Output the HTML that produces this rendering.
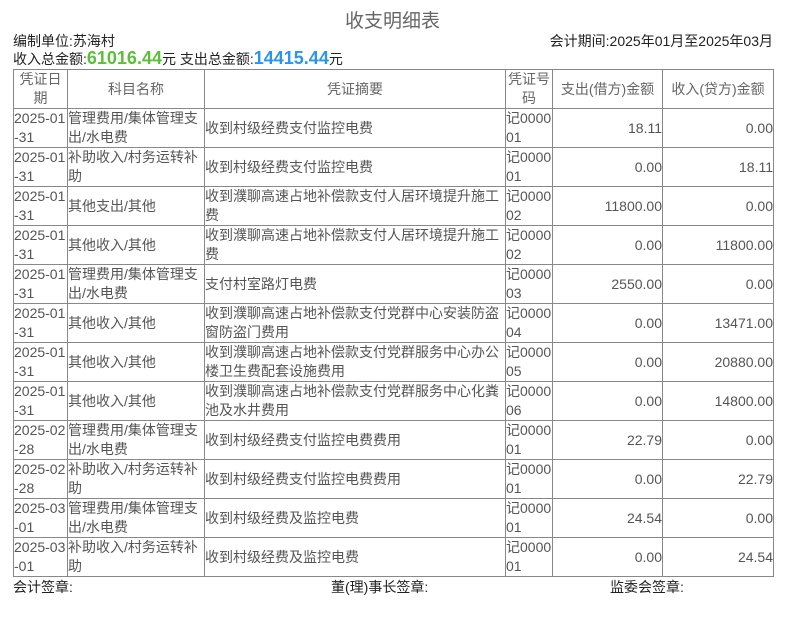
<!DOCTYPE html>
<html><head><meta charset="utf-8"><style>
*{margin:0;padding:0;box-sizing:border-box}
body{width:785px;height:618px;background:#fff;font-family:"Liberation Sans","Noto Sans CJK SC",sans-serif;font-size:14px;color:#222;position:relative;overflow:hidden}
.t{position:absolute;left:0;width:785px;top:6px;text-align:center;font-size:19px;color:#666}
.a{position:absolute;left:13px;top:31px}
.b{position:absolute;right:12px;top:31px}
.c{position:absolute;left:13px;top:48px}
.g{color:#5bbf3a;font-weight:bold;font-size:18px}
.bl{color:#2b95ee;font-weight:bold;font-size:18px}
table{position:absolute;left:13px;top:69px;border-collapse:collapse;table-layout:fixed;width:760px}
td,th{border:1px solid #888;line-height:19px;height:39px;color:#555;font-weight:normal;padding:0;overflow:hidden;word-break:break-all}
th{color:#666;text-align:center}
td.r{text-align:right;padding-right:0}
.f{position:absolute;top:577px}
</style></head><body>
<div class="t">收支明细表</div>
<div class="a">编制单位:苏海村</div>
<div class="b">会计期间:2025年01月至2025年03月</div>
<div class="c">收入总金额:<span class="g">61016.44</span>元 支出总金额:<span class="bl">14415.44</span>元</div>
<table>
<colgroup><col style="width:54px"><col style="width:137px"><col style="width:301px"><col style="width:47px"><col style="width:110px"><col style="width:111px"></colgroup>
<tr><th>凭证日期</th><th>科目名称</th><th>凭证摘要</th><th>凭证号码</th><th>支出(借方)金额</th><th>收入(贷方)金额</th></tr>
<tr><td>2025-01-31</td><td>管理费用/集体管理支出/水电费</td><td>收到村级经费支付监控电费</td><td>记000001</td><td class="r">18.11</td><td class="r">0.00</td></tr>
<tr><td>2025-01-31</td><td>补助收入/村务运转补助</td><td>收到村级经费支付监控电费</td><td>记000001</td><td class="r">0.00</td><td class="r">18.11</td></tr>
<tr><td>2025-01-31</td><td>其他支出/其他</td><td>收到濮聊高速占地补偿款支付人居环境提升施工费</td><td>记000002</td><td class="r">11800.00</td><td class="r">0.00</td></tr>
<tr><td>2025-01-31</td><td>其他收入/其他</td><td>收到濮聊高速占地补偿款支付人居环境提升施工费</td><td>记000002</td><td class="r">0.00</td><td class="r">11800.00</td></tr>
<tr><td>2025-01-31</td><td>管理费用/集体管理支出/水电费</td><td>支付村室路灯电费</td><td>记000003</td><td class="r">2550.00</td><td class="r">0.00</td></tr>
<tr><td>2025-01-31</td><td>其他收入/其他</td><td>收到濮聊高速占地补偿款支付党群中心安装防盗窗防盗门费用</td><td>记000004</td><td class="r">0.00</td><td class="r">13471.00</td></tr>
<tr><td>2025-01-31</td><td>其他收入/其他</td><td>收到濮聊高速占地补偿款支付党群服务中心办公楼卫生费配套设施费用</td><td>记000005</td><td class="r">0.00</td><td class="r">20880.00</td></tr>
<tr><td>2025-01-31</td><td>其他收入/其他</td><td>收到濮聊高速占地补偿款支付党群服务中心化粪池及水井费用</td><td>记000006</td><td class="r">0.00</td><td class="r">14800.00</td></tr>
<tr><td>2025-02-28</td><td>管理费用/集体管理支出/水电费</td><td>收到村级经费支付监控电费费用</td><td>记000001</td><td class="r">22.79</td><td class="r">0.00</td></tr>
<tr><td>2025-02-28</td><td>补助收入/村务运转补助</td><td>收到村级经费支付监控电费费用</td><td>记000001</td><td class="r">0.00</td><td class="r">22.79</td></tr>
<tr><td>2025-03-01</td><td>管理费用/集体管理支出/水电费</td><td>收到村级经费及监控电费</td><td>记000001</td><td class="r">24.54</td><td class="r">0.00</td></tr>
<tr><td>2025-03-01</td><td>补助收入/村务运转补助</td><td>收到村级经费及监控电费</td><td>记000001</td><td class="r">0.00</td><td class="r">24.54</td></tr>
</table>
<div class="f" style="left:13px">会计签章:</div>
<div class="f" style="left:331px">董(理)事长签章:</div>
<div class="f" style="left:610px">监委会签章:</div>
</body></html>
